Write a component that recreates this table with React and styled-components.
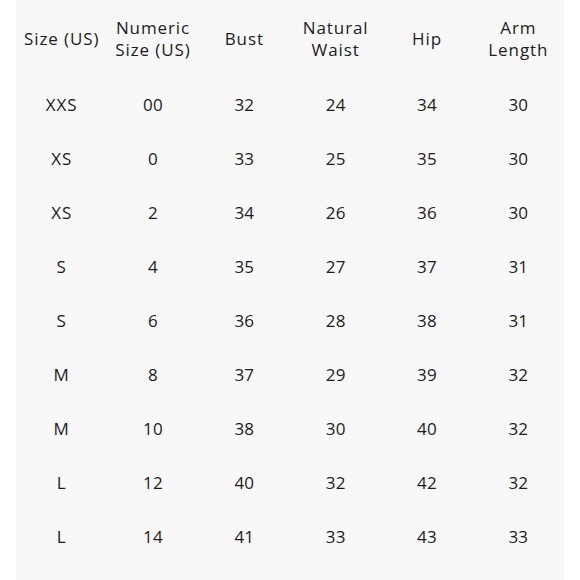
import React from "react";
import styled, { createGlobalStyle } from "styled-components";

const Global = createGlobalStyle`
  html, body { margin: 0; padding: 0; background: #ffffff; }
  body { font-family: "Open Sans", "Noto Sans", sans-serif; color: #1c1c1c; }
`;

const Panel = styled.div`
  margin: 0 16px;
  height: 580px;
  box-sizing: border-box;
  background: #f8f8f8;
  display: grid;
  grid-template-columns: repeat(6, 1fr);
  grid-template-rows: 78px repeat(9, 54px);
  align-items: center;
`;

const Head = styled.div`
  text-align: center;
  font-size: 17px;
  line-height: 22px;
  letter-spacing: 0.9px;
  white-space: pre-line;
`;

const Cell = styled.div`
  text-align: center;
  font-size: 17px;
  line-height: 22px;
  letter-spacing: ${(p) => (p.$alpha ? "0.9px" : "0.2px")};
`;

const headers = ["Size (US)", "Numeric\nSize (US)", "Bust", "Natural\nWaist", "Hip", "Arm\nLength"];
const rows = [
  ["XXS", "00", "32", "24", "34", "30"],
  ["XS", "0", "33", "25", "35", "30"],
  ["XS", "2", "34", "26", "36", "30"],
  ["S", "4", "35", "27", "37", "31"],
  ["S", "6", "36", "28", "38", "31"],
  ["M", "8", "37", "29", "39", "32"],
  ["M", "10", "38", "30", "40", "32"],
  ["L", "12", "40", "32", "42", "32"],
  ["L", "14", "41", "33", "43", "33"],
];

export default function App() {
  return (
    <>
      <Global />
      <Panel>
        {headers.map((h) => (
          <Head key={h}>{h}</Head>
        ))}
        {rows.map((r, i) =>
          r.map((c, j) => (
            <Cell key={i + "-" + j} $alpha={j === 0}>
              {c}
            </Cell>
          ))
        )}
      </Panel>
    </>
  );
}
